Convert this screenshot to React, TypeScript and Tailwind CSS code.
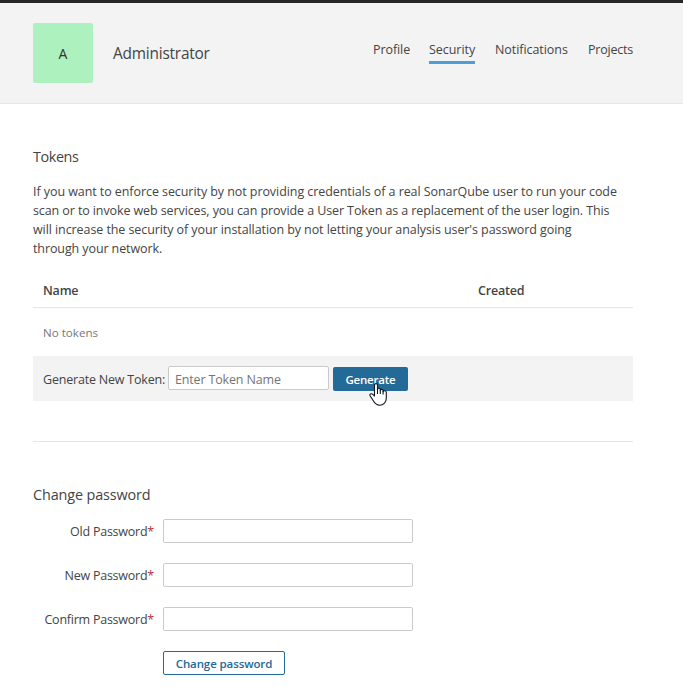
const TABS = [
  { label: 'Profile', active: false, style: 'w-[36px] tracking-[-0.08px]' },
  { label: 'Security', active: true, style: 'w-[46px] tracking-[-0.05px]' },
  { label: 'Notifications', active: false, style: 'w-[73px] tracking-[-0.06px]' },
  { label: 'Projects', active: false, style: 'w-[45px] tracking-[-0.22px]' },
];

const INTRO = [
  {
    text: 'If you want to enforce security by not providing credentials of a real SonarQube user to run your code',
    tracking: 'tracking-[-0.07px]',
  },
  {
    text: 'scan or to invoke web services, you can provide a User Token as a replacement of the user login. This',
    tracking: 'tracking-[-0.1px]',
  },
  {
    text: "will increase the security of your installation by not letting your analysis user's password going",
    tracking: 'tracking-[-0.08px]',
  },
  { text: 'through your network.', tracking: 'tracking-[-0.1px]' },
];

const FIELDS = ['Old Password', 'New Password', 'Confirm Password'];

function HandCursor() {
  return (
    <svg className="absolute left-[36px] top-[15px]" width="18" height="24" viewBox="0 0 18 24" fill="none">
      <path
        d="M5.5 14V2.7C5.5 1.2 8.5 1.2 8.5 2.7V8V7.2C8.5 5.8 11.3 5.9 11.3 7.4V8.4C11.3 7 14.1 7.1 14.1 8.6V9.6C14.1 8.3 17.3 8.6 17.3 10.2V16C17.3 20 14.6 23.2 10.6 23.2C7.1 23.2 5.4 20.8 3.8 18L1.1 13.8C0.3 12.3 2.2 11 3.5 12.2Z"
        fill="#fff"
        stroke="#101522"
        strokeWidth="1.1"
        strokeLinejoin="round"
      />
      <path d="M8.5 7V12M11.3 8V12M14.1 9V12.5" stroke="#101522" strokeWidth="1.1" />
    </svg>
  );
}

function Header() {
  return (
    <header className="flex h-[104px] items-start border-b border-t-[3px] border-b-[#e6e6e6] border-t-[#262626] bg-[#f3f3f3] pl-[33px] pr-[50px]">
      <div className="mt-5 flex h-[60px] w-[60px] items-center justify-center rounded-[2px] bg-[#adf1bf] text-[14px] text-[#333]">
        A
      </div>
      <h1 className="ml-5 mt-[39px] whitespace-nowrap text-[15.4px] leading-6 tracking-[-0.2px]">Administrator</h1>
      <nav className="ml-auto mt-[37px] flex gap-5">
        {TABS.map((tab) => (
          <a
            key={tab.label}
            className={`${tab.style} h-6 whitespace-nowrap leading-5 ${tab.active ? 'border-b-[3px] border-[#4b9fd5]' : ''}`}
          >
            {tab.label}
          </a>
        ))}
      </nav>
    </header>
  );
}

function Tokens() {
  return (
    <section className="border-b border-[#e6e6e6] pb-10">
      <h2 className="text-[14.4px] leading-6 tracking-[-0.4px]">Tokens</h2>
      <div className="mt-[13px] leading-[19px]">
        {INTRO.map((line) => (
          <p key={line.text} className={`whitespace-nowrap ${line.tracking}`}>
            {line.text}
          </p>
        ))}
      </div>
      <div className="mt-4 flex h-[34px] items-center border-b border-[#e6e6e6] pl-[10px] pt-[2px] font-semibold tracking-[-0.2px]">
        <span className="w-[435px]">Name</span>
        <span>Created</span>
      </div>
      <div className="flex h-12 items-center pl-[10px] pt-[2px] text-[11.6px] text-[#777]">No tokens</div>
      <div className="flex h-[45px] items-start bg-[#f3f3f3] pl-[10px] pt-[10px]">
        <label className="mt-1 w-[125px] whitespace-nowrap leading-5 tracking-[-0.2px]">Generate New Token:</label>
        <input
          className="h-6 w-[161px] rounded-[2px] border border-[#cacaca] bg-white px-[6px] pt-[2px] tracking-[-0.16px] placeholder:text-[#757575]"
          placeholder="Enter Token Name"
        />
        <div className="relative ml-1 mt-px">
          <button className="h-6 w-[75px] rounded-[2px] bg-[#236a97] pt-px text-[11.5px] font-semibold tracking-[-0.2px] text-white">
            Generate
          </button>
          <HandCursor />
        </div>
      </div>
    </section>
  );
}

function ChangePassword() {
  return (
    <section className="pt-[41px]">
      <h2 className="text-[14.4px] leading-6 tracking-[-0.12px]">Change password</h2>
      <div className="mt-3 flex flex-col gap-5">
        {FIELDS.map((field) => (
          <div key={field} className="flex h-6 items-center">
            <label className="w-[121px] whitespace-nowrap pt-[2px] text-right tracking-[-0.24px]">
              {field}
              <span className="text-[#b8323c]">*</span>
            </label>
            <input type="password" className="ml-[9px] h-6 w-[250px] rounded-[2px] border border-[#cacaca] bg-white" />
          </div>
        ))}
      </div>
      <button className="ml-[130px] mt-5 h-6 w-[122px] whitespace-nowrap rounded-[2px] border border-[#236a97] pt-px text-[11.5px] font-semibold tracking-[-0.1px] text-[#236a97]">
        Change password
      </button>
    </section>
  );
}

export default function App() {
  return (
    <div className="h-[697px] overflow-hidden bg-white font-['Open_Sans','Noto_Sans',sans-serif] text-[12.5px] text-[#444]">
      <Header />
      <main className="ml-[33px] mt-[41px] w-[600px]">
        <Tokens />
        <ChangePassword />
      </main>
    </div>
  );
}
